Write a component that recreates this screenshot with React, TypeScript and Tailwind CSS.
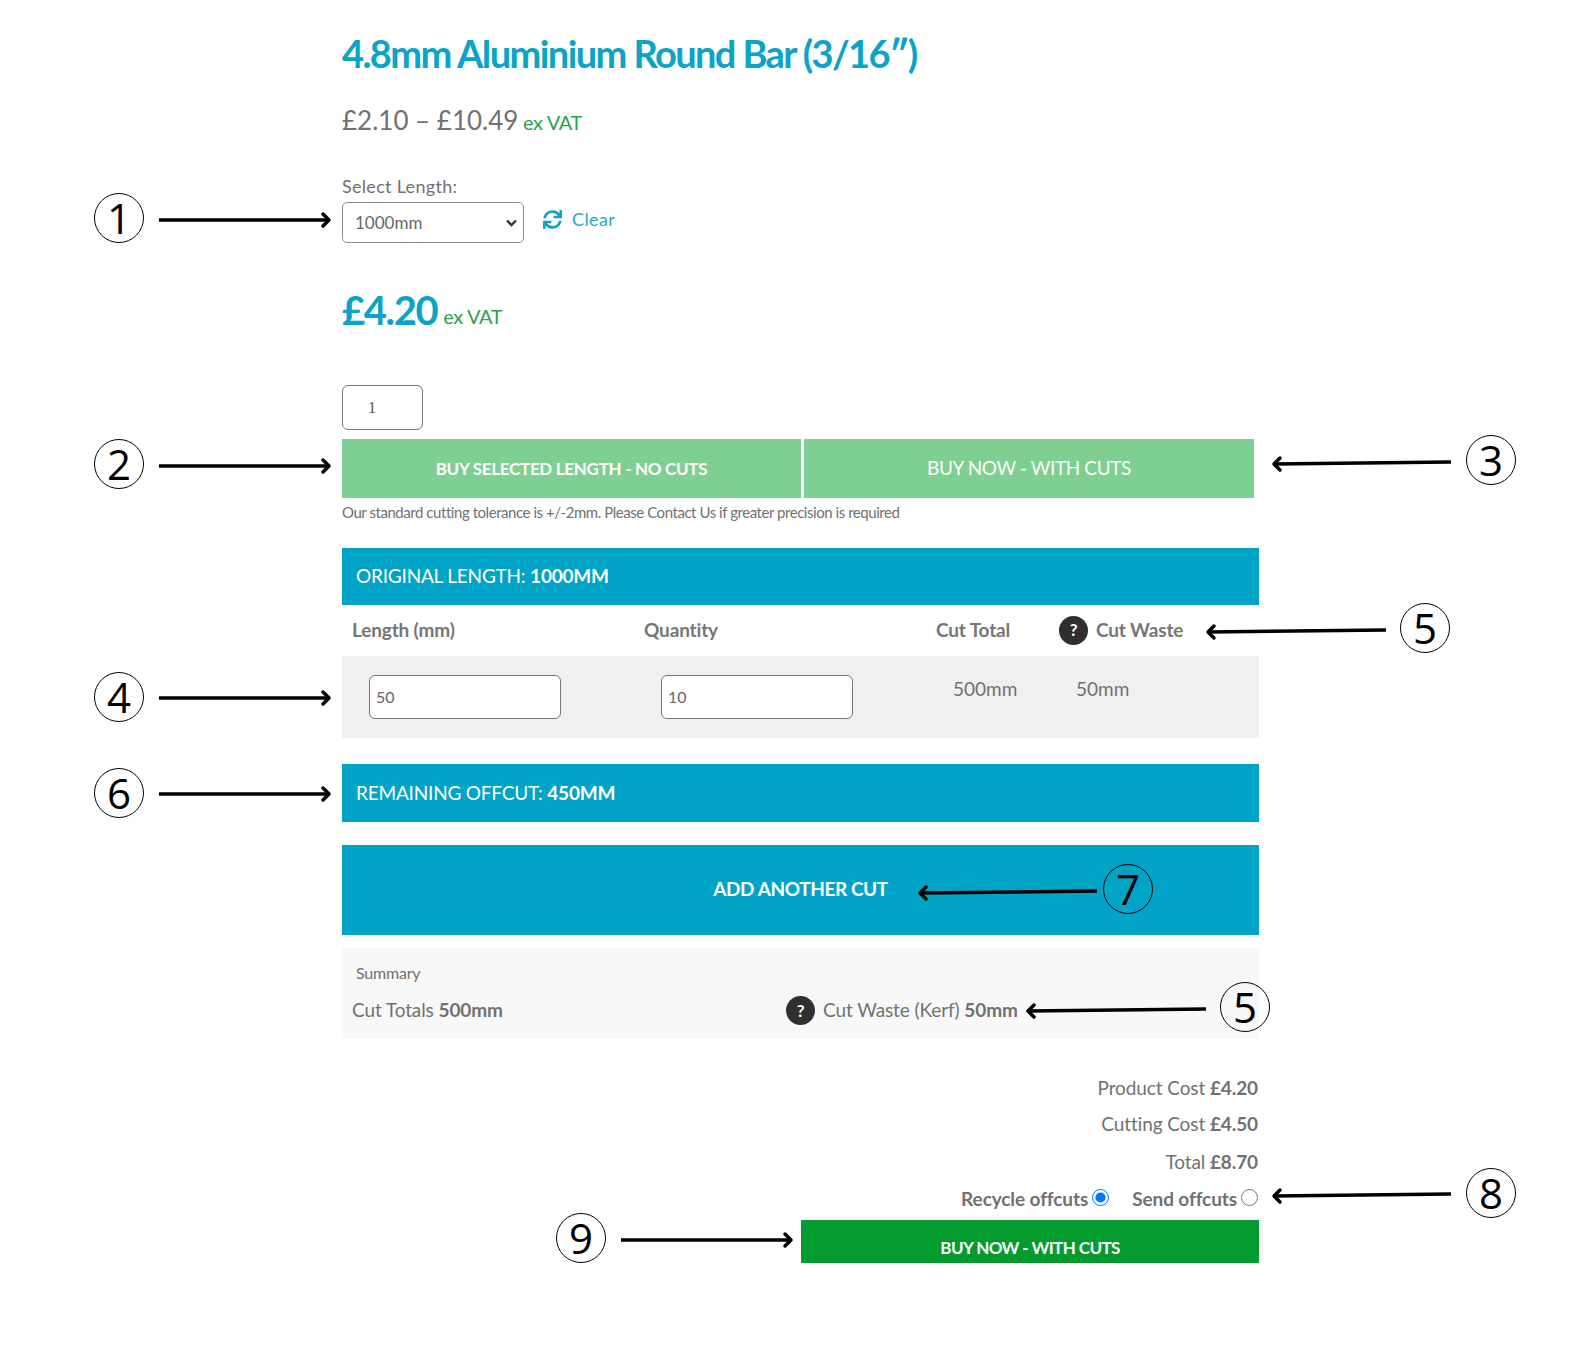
import React from 'react';
import { FaSync } from 'react-icons/fa';

const Question: React.FC = () => (
  <span className="flex h-[29px] w-[29px] shrink-0 items-center justify-center rounded-full bg-[#2f2f2f] text-[17px] font-bold text-white">
    ?
  </span>
);

const Callout: React.FC<{ n: string; x: number; y: number }> = ({ n, x, y }) => (
  <div
    className="absolute flex h-[50px] w-[50px] items-center justify-center rounded-full border-[1.5px] border-black font-['Open_Sans',sans-serif] text-[42px] leading-none text-black"
    style={{ left: x - 25, top: y - 25 }}
  >
    {n}
  </div>
);

// x1 is the tail, x2 the arrow head
const Arrow: React.FC<{ x1: number; y1: number; x2: number; y2: number }> = ({ x1, y1, x2, y2 }) => {
  const dir = x2 > x1 ? -1 : 1;
  return (
    <svg className="pointer-events-none absolute left-0 top-0" width="1586" height="1369">
      <path d={`M${x1} ${y1}L${x2} ${y2}`} stroke="#000" strokeWidth="3.5" fill="none" />
      <path
        d={`M${x2 + dir * 6} ${y2 - 6}L${x2} ${y2}L${x2 + dir * 6} ${y2 + 6}`}
        stroke="#000"
        strokeWidth="3.5"
        strokeLinecap="round"
        strokeLinejoin="round"
        fill="none"
      />
    </svg>
  );
};

const Annotations: React.FC = () => (
  <>
    <Callout n="1" x={119} y={218} />
    <Arrow x1={159} y1={220} x2={329} y2={220} />
    <Callout n="2" x={119} y={464} />
    <Arrow x1={159} y1={466} x2={329} y2={466} />
    <Callout n="3" x={1491} y={460} />
    <Arrow x1={1451} y1={462} x2={1274} y2={464} />
    <Callout n="5" x={1425} y={628} />
    <Arrow x1={1386} y1={630} x2={1208} y2={632} />
    <Callout n="4" x={119} y={697} />
    <Arrow x1={159} y1={698} x2={329} y2={698} />
    <Callout n="6" x={119} y={793} />
    <Arrow x1={159} y1={794} x2={329} y2={794} />
    <Callout n="7" x={1128} y={889} />
    <Arrow x1={1097} y1={891} x2={920} y2={893} />
    <Callout n="5" x={1245} y={1007} />
    <Arrow x1={1206} y1={1009} x2={1028} y2={1011} />
    <Callout n="8" x={1491} y={1193} />
    <Arrow x1={1451} y1={1194} x2={1274} y2={1196} />
    <Callout n="9" x={581} y={1238} />
    <Arrow x1={621} y1={1240} x2={791} y2={1240} />
  </>
);

export default function App() {
  return (
    <div className="relative h-[1369px] w-[1586px] overflow-hidden bg-white font-['Lato',sans-serif] text-[#717171]">
      <main className="ml-[342px] flex w-[917px] flex-col pt-[29px]">
        <h1 className="h-[48px] text-[38px] font-bold leading-[48px] tracking-[-1.6px] text-[#0ba3c7]">
          4.8mm Aluminium Round Bar (3/16″)
        </h1>

        <p className="mt-[27px] h-[32px] text-[26px] leading-[32px]">
          £2.10 – £10.49 <span className="-ml-[2px] text-[20px] tracking-[-0.4px] text-[#2ba24c]">ex VAT</span>
        </p>

        <label className="mt-[39px] h-[22px] text-[18px] leading-[22px] tracking-[0.3px]">Select Length:</label>
        <div className="mt-[5px] flex items-center">
          <div className="relative">
            <select
              defaultValue="1000mm"
              className="h-[41px] w-[182px] appearance-none rounded-[5px] border border-[#8f8f8f] bg-white pl-[12px] text-[17px] text-[#666] outline-none"
            >
              <option>1000mm</option>
            </select>
            <svg className="pointer-events-none absolute right-[6px] top-[16px]" width="13" height="10" viewBox="0 0 13 10">
              <path d="M2 2.5L6.5 7L11 2.5" stroke="#333" strokeWidth="2.4" fill="none" />
            </svg>
          </div>
          <FaSync className="mb-[6px] ml-[19px] text-[19px] text-[#0ba3c7]" />
          <span className="mb-[6px] ml-[10px] text-[18px] tracking-[0.4px] text-[#2ba8c9]">Clear</span>
        </div>

        <div className="mt-[42px] flex h-[50px] items-baseline leading-[50px]">
          <span className="text-[40px] font-bold tracking-[-1.4px] text-[#0ba3c7]">£4.20</span>
          <span className="ml-[6px] -translate-y-[1px] text-[20px] tracking-[-0.4px] text-[#2ba24c]">ex VAT</span>
        </div>

        <input
          defaultValue="1"
          className="mt-[50px] h-[45px] w-[81px] rounded-[6px] border border-[#777] bg-white pl-[25px] font-['Liberation_Serif',serif] text-[16px] text-[#555] outline-none"
        />

        <div className="mt-[9px] flex h-[59px] w-[912px] gap-[3px]">
          <button className="flex w-[459px] items-center justify-center bg-[#7fcf93] text-[17px] font-bold tracking-[-0.3px] text-white">
            BUY SELECTED LENGTH - NO CUTS
          </button>
          <button className="flex flex-1 items-center justify-center bg-[#7fcf93] text-[19px] tracking-[-0.4px] text-white">
            BUY NOW - WITH CUTS
          </button>
        </div>

        <p className="mt-[4px] h-[20px] text-[15px] leading-[20px] tracking-[-0.45px]">
          Our standard cutting tolerance is +/-2mm. Please Contact Us if greater precision is required
        </p>

        <div className="mt-[26px] flex h-[57px] items-center bg-[#01a3c6] pl-[14px] text-[19px] tracking-[-0.2px] text-white">
          ORIGINAL LENGTH:&nbsp;<b>1000MM</b>
        </div>

        <div className="grid h-[51px] grid-cols-[292px_292px_123px_1fr] items-center pb-[1px] pl-[10px] text-[19px] font-bold tracking-[-0.15px] text-[#767676]">
          <span>Length (mm)</span>
          <span>Quantity</span>
          <span>Cut Total</span>
          <span className="flex items-center gap-[8px]">
            <Question />
            Cut Waste
          </span>
        </div>

        <div className="grid h-[82px] grid-cols-[292px_292px_123px_1fr] items-start bg-[#f0f0f0] pl-[27px] pt-[19px] text-[19px]">
          <input
            defaultValue="50"
            className="h-[44px] w-[192px] rounded-[6px] border border-[#777] bg-white pb-[2px] pl-[6px] text-[16px] text-[#666] outline-none"
          />
          <input
            defaultValue="10"
            className="h-[44px] w-[192px] rounded-[6px] border border-[#777] bg-white pb-[2px] pl-[6px] text-[16px] text-[#666] outline-none"
          />
          <span>500mm</span>
          <span>50mm</span>
        </div>

        <div className="mt-[26px] flex h-[58px] items-center bg-[#01a3c6] pl-[14px] text-[19px] tracking-[-0.2px] text-white">
          REMAINING OFFCUT:&nbsp;<b>450MM</b>
        </div>

        <button className="mt-[23px] flex h-[90px] items-center justify-center bg-[#01a3c6] pb-[2px] text-[19px] font-bold tracking-[-0.4px] text-white">
          ADD ANOTHER CUT
        </button>

        <section className="mt-[13px] h-[91px] bg-[#f8f8f8]">
          <p className="pl-[14px] pt-[16px] text-[16px] leading-[18px] tracking-[-0.2px]">Summary</p>
          <div className="mt-[14px] flex h-[29px] items-center pl-[10px] text-[19px] tracking-[-0.1px]">
            <span className="w-[434px]">
              Cut Totals <b>500mm</b>
            </span>
            <Question />
            <span className="ml-[8px]">
              Cut Waste (Kerf) <b>50mm</b>
            </span>
          </div>
        </section>

        <div className="mt-[31px] flex flex-col items-end pr-[1px] text-[19px] leading-[36px] tracking-[-0.1px]">
          <span className="h-[36px]">
            Product Cost <b>£4.20</b>
          </span>
          <span className="h-[38px]">
            Cutting Cost <b>£4.50</b>
          </span>
          <span className="h-[37px]">
            Total <b>£8.70</b>
          </span>
          <div className="flex h-[37px] items-center pb-[2px] font-bold tracking-[-0.1px]">
            <span>Recycle offcuts</span>
            <input type="radio" name="offcuts" defaultChecked className="mb-[3px] ml-[4px] h-[17px] w-[17px]" />
            <span className="ml-[23px]">Send offcuts</span>
            <input type="radio" name="offcuts" className="mb-[3px] ml-[4px] h-[17px] w-[17px]" />
          </div>
        </div>

        <button className="ml-[459px] mt-[2px] flex h-[43px] w-[458px] items-center justify-center bg-[#049c2e] pt-[13px] text-[17px] font-bold tracking-[-0.6px] text-white">
          BUY NOW - WITH CUTS
        </button>
      </main>

      <Annotations />
    </div>
  );
}
